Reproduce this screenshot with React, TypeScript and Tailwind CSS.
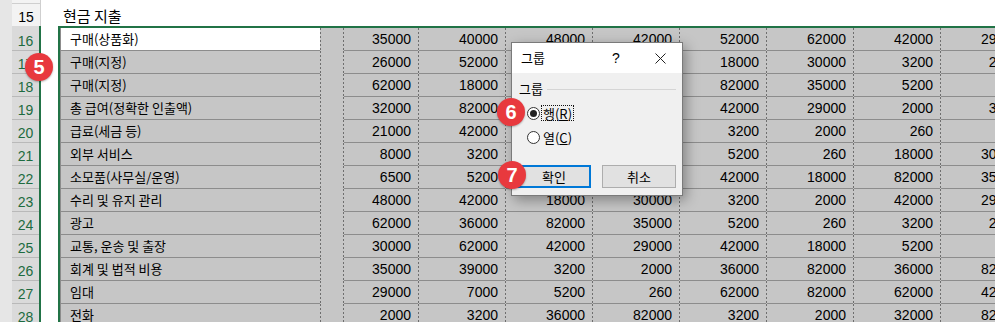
import React from "react";

const rows = [
  { n: 16, label: "구매(상품화)", v: [35000, 40000, 48000, 42000, 52000, 62000, 42000, 29000] },
  { n: 17, label: "구매(지정)", v: [26000, 52000, 42000, 29000, 18000, 30000, 3200, 2000] },
  { n: 18, label: "구매(지정)", v: [62000, 18000, 35000, 5200, 82000, 35000, 5200, 260] },
  { n: 19, label: "총 급여(정확한 인출액)", v: [32000, 82000, 5200, 260, 42000, 29000, 2000, 3200] },
  { n: 20, label: "급료(세금 등)", v: [21000, 42000, 2000, 36000, 3200, 2000, 260, 260] },
  { n: 21, label: "외부 서비스", v: [8000, 3200, 82000, 36000, 5200, 260, 18000, 30000] },
  { n: 22, label: "소모품(사무실/운영)", v: [6500, 5200, 62000, 82000, 42000, 18000, 82000, 35000] },
  { n: 23, label: "수리 및 유지 관리", v: [48000, 42000, 18000, 30000, 3200, 2000, 42000, 29000] },
  { n: 24, label: "광고", v: [62000, 36000, 82000, 35000, 5200, 260, 3200, 2000] },
  { n: 25, label: "교통, 운송 및 출장", v: [30000, 62000, 42000, 29000, 42000, 18000, 5200, 260] },
  { n: 26, label: "회계 및 법적 비용", v: [35000, 39000, 3200, 2000, 36000, 82000, 36000, 82000] },
  { n: 27, label: "임대", v: [29000, 7000, 5200, 260, 62000, 82000, 62000, 42000] },
  { n: 28, label: "전화", v: [2000, 3200, 36000, 82000, 3200, 2000, 32000, 82000] },
];

// column D is narrower than the rest
const widths = ["w-[74px]", "w-[86px]", "w-[86px]", "w-[86px]", "w-[86px]", "w-[86px]", "w-[86px]", "w-[86px]"];

function Dash() {
  return (
    <div className="h-[23px] w-px shrink-0 bg-[repeating-linear-gradient(to_bottom,#6e6e6e_0_2px,transparent_2px_4px)]" />
  );
}

function Badge({ n, className }: { n: number; className: string }) {
  return (
    <div
      className={`absolute flex h-7 w-7 items-center justify-center rounded-full bg-[#e8393e] text-[20px] font-bold text-white shadow-[0_1px_2px_rgba(0,0,0,0.3)] font-['Liberation_Sans',sans-serif] ${className}`}
    >
      {n}
    </div>
  );
}

function Radio({ checked }: { checked?: boolean }) {
  return (
    <div className="flex h-[13px] w-[13px] items-center justify-center rounded-full border border-[#333] bg-white">
      {checked && <div className="h-[7px] w-[7px] rounded-full bg-[#222]" />}
    </div>
  );
}

export default function App() {
  return (
    <div className="relative h-[322px] w-[995px] overflow-hidden bg-white text-black font-['Liberation_Sans','Noto_Sans_CJK_KR',sans-serif]">
      {/* row 14 tail */}
      <div className="flex h-1">
        <div className="w-3 shrink-0 bg-[#e6e6e6]" />
        <div className="w-[29px] shrink-0 border-b border-r border-[#cfcfcf] bg-[#f3f3f3]" />
      </div>

      {/* row 15 */}
      <div className="flex h-[22px]">
        <div className="w-3 shrink-0 bg-[#e6e6e6]" />
        <div className="flex w-[29px] shrink-0 items-center justify-center border-r border-[#cfcfcf] bg-[#f3f3f3] pt-[5px] text-[14px]">
          15
        </div>
        <div className="pl-[22px] pt-[1px] text-[15px] leading-[22px] font-['Noto_Sans_CJK_KR',sans-serif]">
          현금 지출
        </div>
      </div>

      {/* selected block */}
      <div className="flex">
        <div className="w-3 shrink-0 bg-[#e6e6e6]" />
        <div className="w-[29px] shrink-0 border-r-2 border-[#217346] bg-[#dadada] pt-[2px]">
          {rows.map((r) => (
            <div
              key={r.n}
              className="flex h-[23px] items-center justify-center border-b border-[#b9b9b9] pt-[5px] text-[14px] text-[#1d6b40]"
            >
              {r.n}
            </div>
          ))}
        </div>
        <div className="w-[17px] shrink-0" />
        <div className="min-w-0 flex-1 overflow-hidden border-l-2 border-t-2 border-[#217346]">
          {rows.map((r, i) => (
            <div key={r.n} className="flex h-[23px] bg-[#c6c6c6]">
              <div
                className={`flex h-[23px] w-[260px] shrink-0 items-center border-b border-l border-[#8c8c8c] pl-[9px] text-[13px] font-['Noto_Sans_CJK_KR',sans-serif] ${
                  i === 0 ? "bg-white" : ""
                }`}
              >
                {r.label}
              </div>
              <Dash />
              <div className="w-[22px] shrink-0" />
              <Dash />
              {r.v.map((v, j) => (
                <React.Fragment key={j}>
                  <div
                    className={`flex h-[23px] shrink-0 items-center justify-end border-b border-[#8c8c8c] pr-[7px] text-[14px] ${widths[j]}`}
                  >
                    {v}
                  </div>
                  <Dash />
                </React.Fragment>
              ))}
            </div>
          ))}
        </div>
      </div>

      {/* 그룹 dialog */}
      <div className="absolute left-[511px] top-[42px] flex h-[154px] w-[172px] flex-col border border-[#7a7a7a] bg-[#f0f0f0] text-[13px] shadow-[3px_4px_12px_rgba(0,0,0,0.35)] font-['Noto_Sans_CJK_KR',sans-serif]">
        <div className="flex h-[30px] shrink-0 items-center bg-white pl-[9px]">
          <span>그룹</span>
          <span className="ml-auto w-[44px] text-center text-[14px] font-['Liberation_Sans',sans-serif]">?</span>
          <span className="flex w-[44px] justify-center">
            <svg width="11" height="11" viewBox="0 0 11 11" fill="none" stroke="#222" strokeWidth="1">
              <path d="M0.5 0.5l10 10M10.5 0.5l-10 10" />
            </svg>
          </span>
        </div>
        <div className="flex flex-1 flex-col pl-[7px] pr-[6px] pt-[7px]">
          <div className="flex h-[18px] items-center">
            <span>그룹</span>
            <div className="ml-[4px] h-px flex-1 bg-[#d5d5d5]" />
          </div>
          <div className="mt-[6px] flex h-[18px] items-center pl-[8px]">
            <Radio checked />
            <span className="ml-[1px] flex h-[16px] items-center border border-dotted border-[#111] px-[1px] leading-none">
              행(<span className="underline">R</span>)
            </span>
          </div>
          <div className="mt-[6px] flex h-[18px] items-center pl-[8px]">
            <Radio />
            <span className="ml-[3px] leading-none">
              열(<span className="underline">C</span>)
            </span>
          </div>
          <div className="-ml-[2px] mt-[19px] flex gap-[11px]">
            <div className="flex h-[23px] w-[74px] items-center justify-center border-2 border-[#0078d7] bg-[#e1e1e1]">
              확인
            </div>
            <div className="flex h-[23px] w-[74px] items-center justify-center border border-[#adadad] bg-[#e1e1e1]">
              취소
            </div>
          </div>
        </div>
      </div>

      <Badge n={5} className="left-[25px] top-[53px]" />
      <Badge n={6} className="left-[497px] top-[98px]" />
      <Badge n={7} className="left-[498px] top-[161px]" />
    </div>
  );
}
